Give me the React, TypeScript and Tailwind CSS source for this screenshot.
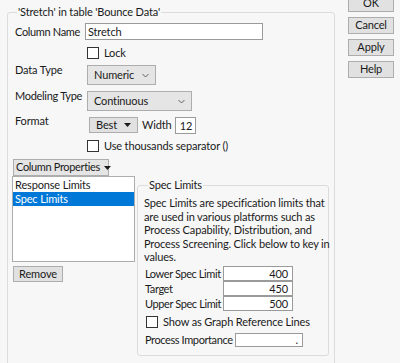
import React from 'react';

function Chevron() {
  return (
    <svg width="7" height="5" viewBox="0 0 7 5" className="text-[#606060] shrink-0">
      <path d="M0.5 1 L3.5 4 L6.5 1" fill="none" stroke="currentColor" strokeWidth="1" />
    </svg>
  );
}

function Caret() {
  return (
    <svg width="7" height="4" viewBox="0 0 7 4" className="shrink-0">
      <path d="M0 0 H7 L3.5 4 Z" fill="#1a1a1a" />
    </svg>
  );
}

function CheckBox({ label }: { label: string }) {
  return (
    <div className="flex items-center h-[13px] whitespace-nowrap">
      <span className="w-[12px] h-[12px] shrink-0 border border-[#333] bg-white" />
      <span className="ml-[5px] leading-[14px]">{label}</span>
    </div>
  );
}

function Btn({ children, className = '' }: { children: React.ReactNode; className?: string }) {
  return (
    <div className={`flex items-center justify-center shrink-0 whitespace-nowrap bg-[#e1e1e1] border border-[#adadad] ${className}`}>
      {children}
    </div>
  );
}

export default function App() {
  return (
    <div className="w-[400px] h-[363px] overflow-hidden bg-[#f7f7f7] flex items-start whitespace-nowrap font-['Lato',sans-serif] text-[11px] tracking-[-0.15px] text-[#1a1a1a]">
      {/* Column Info group */}
      <fieldset className="ml-[7px] mt-[5px] w-[328px] min-w-0 h-[380px] shrink-0 border border-[#dcdcdc] rounded-[3px] pl-[4px] pt-[4px]">
        <legend className="ml-[5px] px-[1px] leading-[14px]">'Stretch' in table 'Bounce Data'</legend>

        <div className="flex items-center h-[17px]">
          <span className="w-[73px] shrink-0 pl-[3px] leading-[14px] tracking-[-0.35px]">Column Name</span>
          <div className="w-[178px] h-[17px] border border-[#9a9a9a] bg-white pl-[2px] leading-[15px]">Stretch</div>
        </div>

        <div className="mt-[6px] pl-[75px]">
          <CheckBox label="Lock" />
        </div>

        <div className="mt-[6px] flex items-start">
          <span className="w-[75px] shrink-0 pl-[3px] -mt-[2px] leading-[14px]">Data Type</span>
          <div className="w-[69px] h-[20px] border border-[#adadad] bg-[#e5e5e5] flex items-center justify-between pl-[6px] pr-[6px]">
            <span>Numeric</span>
            <Chevron />
          </div>
        </div>

        <div className="mt-[6px] flex items-start">
          <span className="w-[75px] shrink-0 pl-[3px] -mt-[2px] leading-[14px] tracking-[-0.3px]">Modeling Type</span>
          <div className="w-[105px] h-[20px] border border-[#adadad] bg-[#e5e5e5] flex items-center justify-between pl-[6px] pr-[6px]">
            <span>Continuous</span>
            <Chevron />
          </div>
        </div>

        <div className="mt-[6px] flex items-start">
          <span className="w-[77px] shrink-0 pl-[3px] -mt-[3px] leading-[14px]">Format</span>
          <Btn className="w-[49px] h-[16px] gap-[7px]">
            <span>Best</span>
            <Caret />
          </Btn>
          <span className="ml-[4px] leading-[16px]">Width</span>
          <div className="ml-[4px] w-[21px] h-[17px] border border-[#9a9a9a] bg-white text-center leading-[15px]">12</div>
        </div>

        <div className="mt-[5px] pl-[75px]">
          <CheckBox label="Use thousands separator ()" />
        </div>

        <Btn className="mt-[7px] ml-[1px] w-[96px] h-[17px] justify-start pl-[2px] gap-[4px] border-[#7a7a7a] bg-[#e5e5e5] tracking-[-0.35px]">
          <span>Column Properties</span>
          <Caret />
        </Btn>

        <div className="flex items-start">
          {/* property list */}
          <div className="w-[123px] shrink-0">
            <div className="h-[86px] border border-[#adadad] bg-white pt-[1px]">
              <div className="h-[14px] pl-[2px] leading-[14px]">Response Limits</div>
              <div className="h-[14px] pl-[2px] leading-[14px] bg-[#0078d7] text-white">Spec Limits</div>
            </div>
            <Btn className="mt-[4px] ml-[1px] w-[50px] h-[16px]">Remove</Btn>
          </div>

          {/* Spec Limits group */}
          <fieldset className="ml-[2px] mt-[2px] w-[192px] min-w-0 h-[178px] shrink-0 border border-[#dcdcdc] rounded-[3px] pl-[6px] pt-[4px]">
            <legend className="ml-[4px] px-[1px] leading-[14px]">Spec Limits</legend>
            <p className="leading-[13.5px]">
              Spec Limits are specification limits that
              <br />
              are used in various platforms such as
              <br />
              Process Capability, Distribution, and
              <br />
              Process Screening. Click below to key in
              <br />
              values.
            </p>

            <div className="mt-[3px] flex flex-col gap-px">
              {[
                ['Lower Spec Limit', '400'],
                ['Target', '450'],
                ['Upper Spec Limit', '500'],
              ].map(([label, value]) => (
                <div key={label} className="flex items-center h-[14px]">
                  <span className="w-[79px] shrink-0 pl-[1px] leading-[14px] tracking-[-0.4px]">{label}</span>
                  <div className="w-[70px] h-[15px] shrink-0 border border-[#9a9a9a] bg-white text-right pr-[4px] leading-[13px]">{value}</div>
                </div>
              ))}
            </div>

            <div className="mt-[5px] pl-[2px]">
              <CheckBox label="Show as Graph Reference Lines" />
            </div>

            <div className="mt-[4px] flex items-center h-[14px]">
              <span className="w-[91px] shrink-0 pl-[1px] leading-[14px] tracking-[-0.4px]">Process Importance</span>
              <div className="w-[68px] h-[14px] shrink-0 border border-[#9a9a9a] bg-white text-right pr-[4px] leading-[12px]">.</div>
            </div>
          </fieldset>
        </div>
      </fieldset>

      {/* dialog buttons */}
      <div className="ml-[13px] -mt-[5px] flex flex-col gap-[5px] shrink-0">
        <Btn className="w-[46px] h-[17px]">OK</Btn>
        <Btn className="w-[46px] h-[17px]">Cancel</Btn>
        <Btn className="w-[46px] h-[17px]">Apply</Btn>
        <Btn className="w-[46px] h-[17px]">Help</Btn>
      </div>
    </div>
  );
}
